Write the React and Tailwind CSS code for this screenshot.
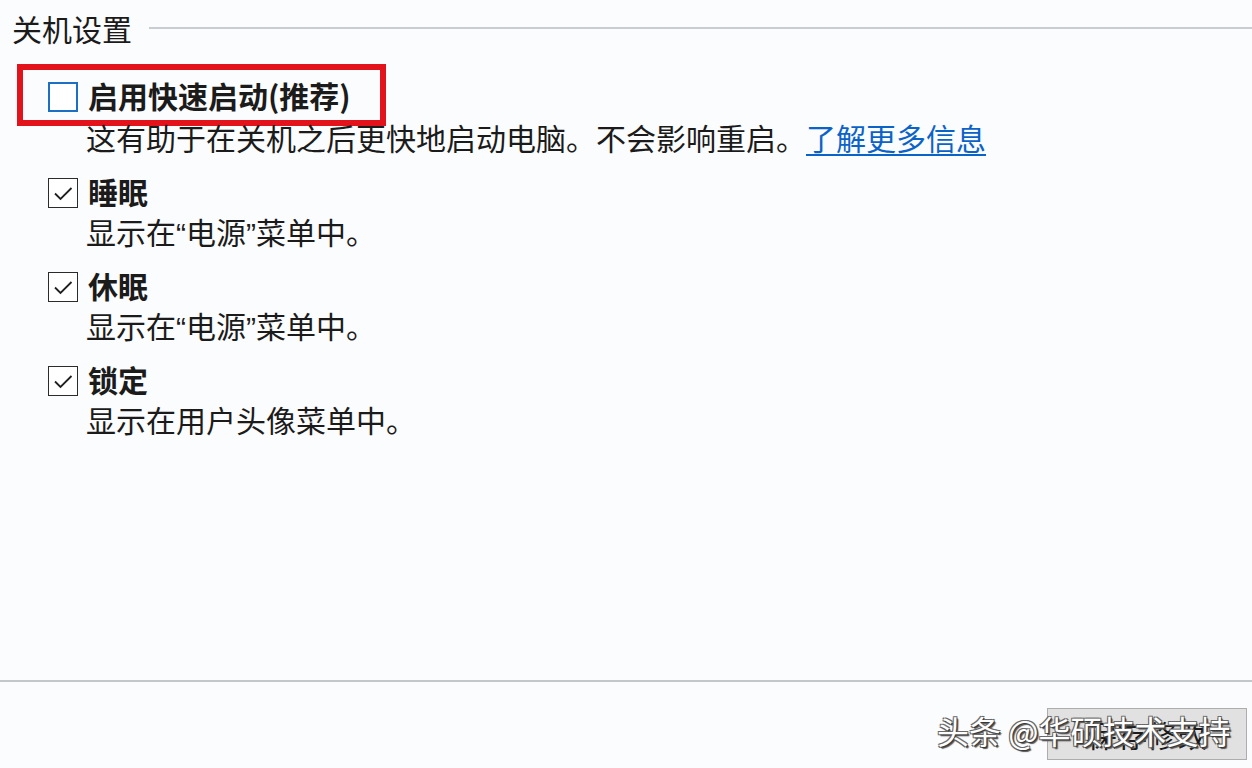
import React from "react";

const CheckBox = ({ checked, highlight }) => (
    <div
        className={
            highlight
                ? "w-[30px] h-[30px] shrink-0 border-2 border-[#1d6fc4] bg-white"
                : "w-[30px] h-[30px] shrink-0 border-[1.5px] border-[#2b2b2b] bg-white flex items-center justify-center"
        }
    >
        {checked && (
            <svg width="27" height="27" viewBox="0 0 27 27" fill="none">
                <polyline points="5,13.5 10.5,19 21.5,8" stroke="#1f1f1f" strokeWidth="1.8" strokeLinejoin="miter" />
            </svg>
        )}
    </div>
);

// western quotes render narrow, like the original system font
const Q = ({ children }) => <span className="font-['Liberation_Sans',sans-serif]">{children}</span>;

const Option = ({ label, desc, className }) => (
    <div className={className}>
        <div className="h-[30px] flex items-center gap-[10px] pl-[48px]">
            <CheckBox checked />
            <span className="font-bold leading-[30px] pb-[5px]">{label}</span>
        </div>
        <p className="pl-[86px] h-[24px] leading-[24px] mt-[11px] whitespace-nowrap">{desc}</p>
    </div>
);

export default function App() {
    return (
        <div className="relative w-[1252px] h-[768px] bg-[#fbfcfd] flex flex-col text-[30px] text-[#1b1b1b] font-['Noto_Sans_CJK_SC',sans-serif] overflow-hidden">
            {/* Section header */}
            <div className="flex items-center pl-[12px] pt-[10px]">
                <span className="leading-[36px]">关机设置</span>
                <div className="flex-1 h-[1.5px] bg-[#c9cdd1] ml-[17px]"></div>
            </div>

            {/* Fast startup (highlighted) */}
            <div className="mt-[18px] ml-[17px] w-[369px] h-[62px] border-[6px] border-[#e3131c] pt-[12px] pl-[25px]">
                <div className="h-[30px] flex items-center gap-[10px]">
                    <CheckBox highlight />
                    <span className="font-bold leading-[30px] pb-[5px] whitespace-nowrap">启用快速启动(推荐)</span>
                </div>
            </div>
            <p className="pl-[86px] h-[24px] leading-[24px] mt-[-1px] whitespace-nowrap">
                这有助于在关机之后更快地启动电脑。不会影响重启。
                <a href="#" className="text-[#0b63c8] underline underline-offset-4 decoration-[1.5px]">了解更多信息</a>
            </p>

            <Option className="mt-[29px]" label="睡眠" desc={<>显示在<Q>“</Q>电源<Q>”</Q>菜单中。</>} />
            <Option className="mt-[29px]" label="休眠" desc={<>显示在<Q>“</Q>电源<Q>”</Q>菜单中。</>} />
            <Option className="mt-[29px]" label="锁定" desc="显示在用户头像菜单中。" />

            <div className="flex-1"></div>

            {/* Footer */}
            <div className="h-[2px] bg-[#c4c7ca]"></div>
            <div className="h-[86px] flex justify-end items-start pt-[26px] pr-[5px]">
                <button className="w-[200px] h-[52px] bg-[#e1e1e1] border-[1.5px] border-[#adadad] text-[30px] text-[#1b1b1b] leading-none">
                    保存修改
                </button>
            </div>

            {/* Watermark */}
            <div className="absolute left-[937px] top-[711px] text-[32px] leading-[38px] text-white whitespace-nowrap [text-shadow:1px_1px_0_#3a3a3a,-1px_-1px_0_#6a6a6a,1px_-1px_0_#6a6a6a,-1px_1px_0_#6a6a6a,2px_2px_1px_#555]">
                头条 @华硕技术支持
            </div>
        </div>
    );
}
